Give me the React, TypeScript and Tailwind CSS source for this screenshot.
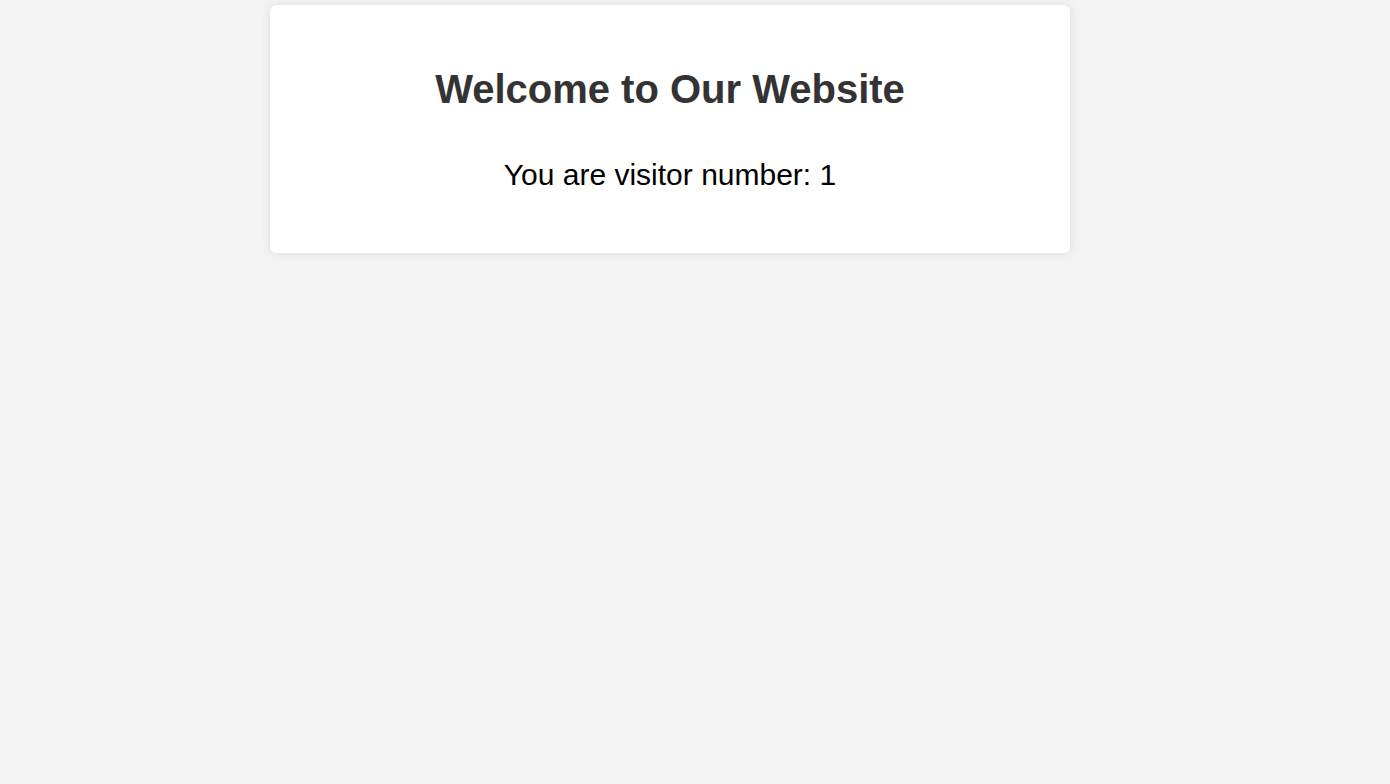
export default function App() {
    const visitorCount = 1;

    return (
        <div className="min-h-screen w-full bg-[#f3f3f3] pt-[5px] font-['Liberation_Sans',Arial,sans-serif]">
            {/* Card */}
            <div className="ml-[270px] w-[800px] rounded-[6px] bg-white px-5 py-[61px] text-center shadow-[0_0_10px_rgba(0,0,0,0.1)]">
                <h1 className="text-[40px] font-bold leading-[46px] text-[#333333]">
                    Welcome to Our Website
                </h1>
                <p className="mt-[46px] text-[30px] leading-[34px] text-black">
                    You are visitor number: {visitorCount}
                </p>
            </div>
        </div>
    );
}
